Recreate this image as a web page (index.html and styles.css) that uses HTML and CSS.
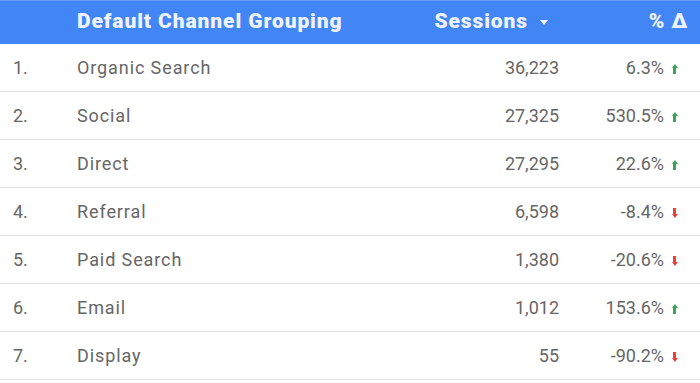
FILE: index.html
```html
<!DOCTYPE html>
<html>
<head>
<meta charset="utf-8">
<link rel="stylesheet" href="styles.css">
</head>
<body>
<div class="table">
  <div class="head">
    <div class="c-idx"></div>
    <div class="c-name">Default Channel Grouping</div>
    <div class="c-sess">Sessions <span class="sort"></span></div>
    <div class="c-pct">% Δ</div>
  </div>
  <div class="row"><div class="c-idx">1.</div><div class="c-name">Organic Search</div><div class="c-sess">36,223</div><div class="c-pct">6.3%<span class="arr up"></span></div></div>
  <div class="row"><div class="c-idx">2.</div><div class="c-name">Social</div><div class="c-sess">27,325</div><div class="c-pct">530.5%<span class="arr up"></span></div></div>
  <div class="row"><div class="c-idx">3.</div><div class="c-name">Direct</div><div class="c-sess">27,295</div><div class="c-pct">22.6%<span class="arr up"></span></div></div>
  <div class="row"><div class="c-idx">4.</div><div class="c-name">Referral</div><div class="c-sess">6,598</div><div class="c-pct">-8.4%<span class="arr down"></span></div></div>
  <div class="row"><div class="c-idx">5.</div><div class="c-name">Paid Search</div><div class="c-sess">1,380</div><div class="c-pct">-20.6%<span class="arr down"></span></div></div>
  <div class="row"><div class="c-idx">6.</div><div class="c-name">Email</div><div class="c-sess">1,012</div><div class="c-pct">153.6%<span class="arr up"></span></div></div>
  <div class="row"><div class="c-idx">7.</div><div class="c-name">Display</div><div class="c-sess">55</div><div class="c-pct">-90.2%<span class="arr down"></span></div></div>
</div>
</body>
</html>
```
FILE: styles.css
```css
* { box-sizing: border-box; }
html, body { margin: 0; padding: 0; background: #fff; }
body { font-family: Roboto, "Liberation Sans", sans-serif; width: 700px; height: 383px; overflow: hidden; }
.table { width: 700px; }
.head, .row { display: flex; align-items: center; }
.head {
  height: 44px;
  background: #4285f4;
  border-top: 1px solid #6a9ef6;
  color: #eef3fe;
  font-weight: 900;
  font-size: 21px;
  letter-spacing: 0.9px;
  padding-bottom: 3px;
}
.row {
  height: 48px;
  border-bottom: 1px solid #e3e3e3;
  color: #666;
  font-size: 18px;
}
.c-idx { width: 77px; padding-left: 13px; }
.c-name { flex: 1; }
.row .c-name { letter-spacing: 0.9px; }
.c-sess { width: 200px; text-align: right; }
.head .c-sess { padding-right: 11px; display: flex; justify-content: flex-end; align-items: center; }
.c-pct { width: 141px; padding-right: 23px; display: flex; justify-content: flex-end; align-items: center; }
.head .c-pct { padding-right: 12px; }
.sort {
  display: inline-block;
  width: 0; height: 0;
  border-left: 4px solid transparent;
  border-right: 4px solid transparent;
  border-top: 5px solid #eef3fe;
  margin-left: 12px;
  margin-top: 2px;
}
.arr {
  display: inline-block;
  width: 5px;
  height: 10px;
  margin-left: 8px;
  position: relative;
  margin-top: 2px;
}
.arr.up { background: linear-gradient(#34a853, #34a853) center 3px / 3px 7px no-repeat; }
.arr.up::before {
  content: ""; position: absolute; left: -0.5px; top: 0;
  border-left: 3px solid transparent; border-right: 3px solid transparent;
  border-bottom: 4px solid #34a853;
}
.arr.down { background: linear-gradient(#ea4335, #ea4335) center 0 / 3px 7px no-repeat; }
.arr.down::before {
  content: ""; position: absolute; left: -0.5px; bottom: 0;
  border-left: 3px solid transparent; border-right: 3px solid transparent;
  border-top: 4px solid #ea4335;
}
```
